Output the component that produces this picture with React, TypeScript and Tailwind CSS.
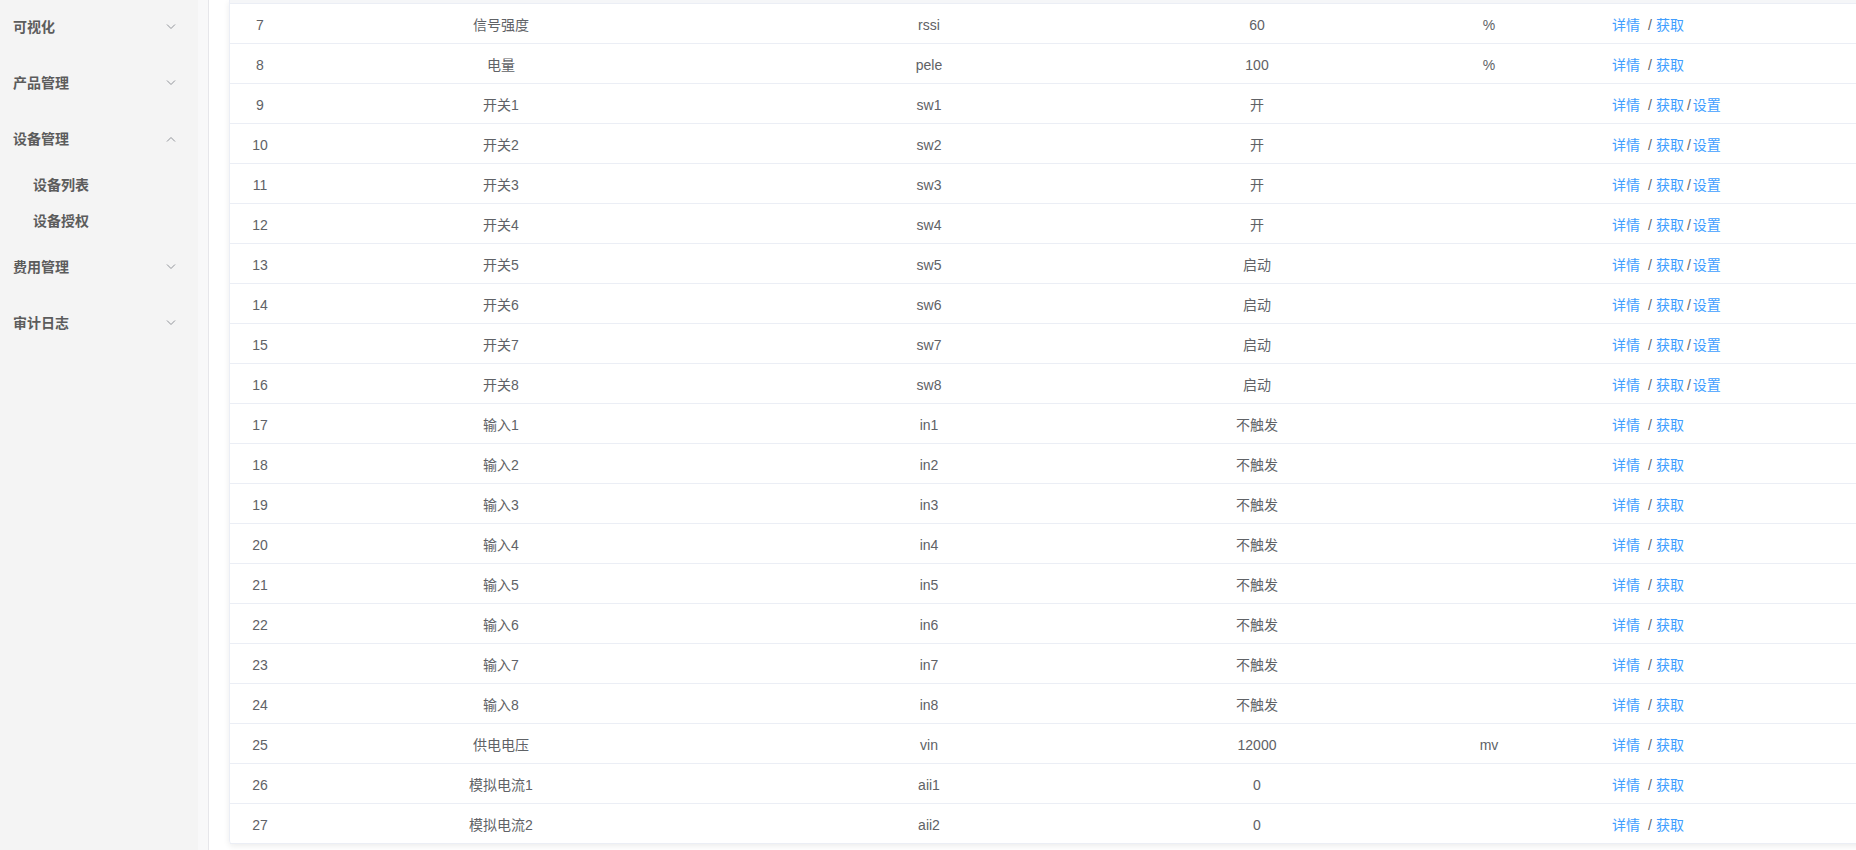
import React from "react";

type Row = { no: number; name: string; id: string; value: string; unit: string; set: boolean };

const rows: Row[] = [
  { no: 7, name: "信号强度", id: "rssi", value: "60", unit: "%", set: false },
  { no: 8, name: "电量", id: "pele", value: "100", unit: "%", set: false },
  { no: 9, name: "开关1", id: "sw1", value: "开", unit: "", set: true },
  { no: 10, name: "开关2", id: "sw2", value: "开", unit: "", set: true },
  { no: 11, name: "开关3", id: "sw3", value: "开", unit: "", set: true },
  { no: 12, name: "开关4", id: "sw4", value: "开", unit: "", set: true },
  { no: 13, name: "开关5", id: "sw5", value: "启动", unit: "", set: true },
  { no: 14, name: "开关6", id: "sw6", value: "启动", unit: "", set: true },
  { no: 15, name: "开关7", id: "sw7", value: "启动", unit: "", set: true },
  { no: 16, name: "开关8", id: "sw8", value: "启动", unit: "", set: true },
  { no: 17, name: "输入1", id: "in1", value: "不触发", unit: "", set: false },
  { no: 18, name: "输入2", id: "in2", value: "不触发", unit: "", set: false },
  { no: 19, name: "输入3", id: "in3", value: "不触发", unit: "", set: false },
  { no: 20, name: "输入4", id: "in4", value: "不触发", unit: "", set: false },
  { no: 21, name: "输入5", id: "in5", value: "不触发", unit: "", set: false },
  { no: 22, name: "输入6", id: "in6", value: "不触发", unit: "", set: false },
  { no: 23, name: "输入7", id: "in7", value: "不触发", unit: "", set: false },
  { no: 24, name: "输入8", id: "in8", value: "不触发", unit: "", set: false },
  { no: 25, name: "供电电压", id: "vin", value: "12000", unit: "mv", set: false },
  { no: 26, name: "模拟电流1", id: "aii1", value: "0", unit: "", set: false },
  { no: 27, name: "模拟电流2", id: "aii2", value: "0", unit: "", set: false },
];

const Chevron = ({ up }: { up?: boolean }) => (
  <svg width="10" height="6" viewBox="0 0 10 6" className="shrink-0">
    {up ? (
      <polyline points="1,5.5 5,1.5 9,5.5" fill="none" stroke="#909399" strokeWidth="1" />
    ) : (
      <polyline points="1,0.5 5,4.5 9,0.5" fill="none" stroke="#909399" strokeWidth="1" />
    )}
  </svg>
);

const TopItem = ({ label, up }: { label: string; up?: boolean }) => (
  <div className="h-[56px] flex items-center justify-between pl-[13px] pr-[22px]">
    <span className="text-[14px] font-bold text-[#5c5c5c]">{label}</span>
    <Chevron up={up} />
  </div>
);

const SubItem = ({ label }: { label: string }) => (
  <div className="h-[36px] flex items-center pl-[33px]">
    <span className="text-[14px] font-bold text-[#5c5c5c]">{label}</span>
  </div>
);

export default function App() {
  return (
    <div
      className="flex h-[850px] w-full overflow-hidden bg-white"
      style={{ fontFamily: '"Liberation Sans", "Noto Sans CJK SC", sans-serif' }}
    >
      <aside className="w-[198px] shrink-0 bg-[#f4f4f4]">
        <div className="-mt-px">
          <TopItem label="可视化" />
          <TopItem label="产品管理" />
          <TopItem label="设备管理" up />
          <SubItem label="设备列表" />
          <SubItem label="设备授权" />
          <TopItem label="费用管理" />
          <TopItem label="审计日志" />
        </div>
      </aside>
      <div className="w-[11px] shrink-0 bg-[#f8f8f9] border-r border-[#e6e6ea]" />
      <main className="flex-1 min-w-0 overflow-hidden bg-white pl-[20px]">
        <div className="w-[1700px] border-l border-[#ebeef5] rounded-bl-[4px] shadow-[0_2px_6px_rgba(0,0,0,0.08)] text-[14px] text-[#606266]">
          <div className="h-[4px] bg-[#f5f6f8] border-b border-[#ebeef5]" />
          {rows.map((r) => (
            <div
              key={r.no}
              className="grid grid-cols-[60px_422px_434px_222px_242px_1fr] h-[40px] pt-[3px] items-center border-b border-[#ebeef5]"
            >
              <div className="text-center">{r.no}</div>
              <div className="text-center">{r.name}</div>
              <div className="text-center">{r.id}</div>
              <div className="text-center">{r.value}</div>
              <div className="text-center">{r.unit}</div>
              <div className="pl-[2px] flex items-center whitespace-nowrap">
                <a className="text-[#409eff]">详情</a>
                <span className="ml-[8px] mr-[4px]">/</span>
                <a className="text-[#409eff]">获取</a>
                {r.set && (
                  <>
                    <span className="ml-[3px] mr-[2px]">/</span>
                    <a className="text-[#409eff]">设置</a>
                  </>
                )}
              </div>
            </div>
          ))}
        </div>
      </main>
    </div>
  );
}
